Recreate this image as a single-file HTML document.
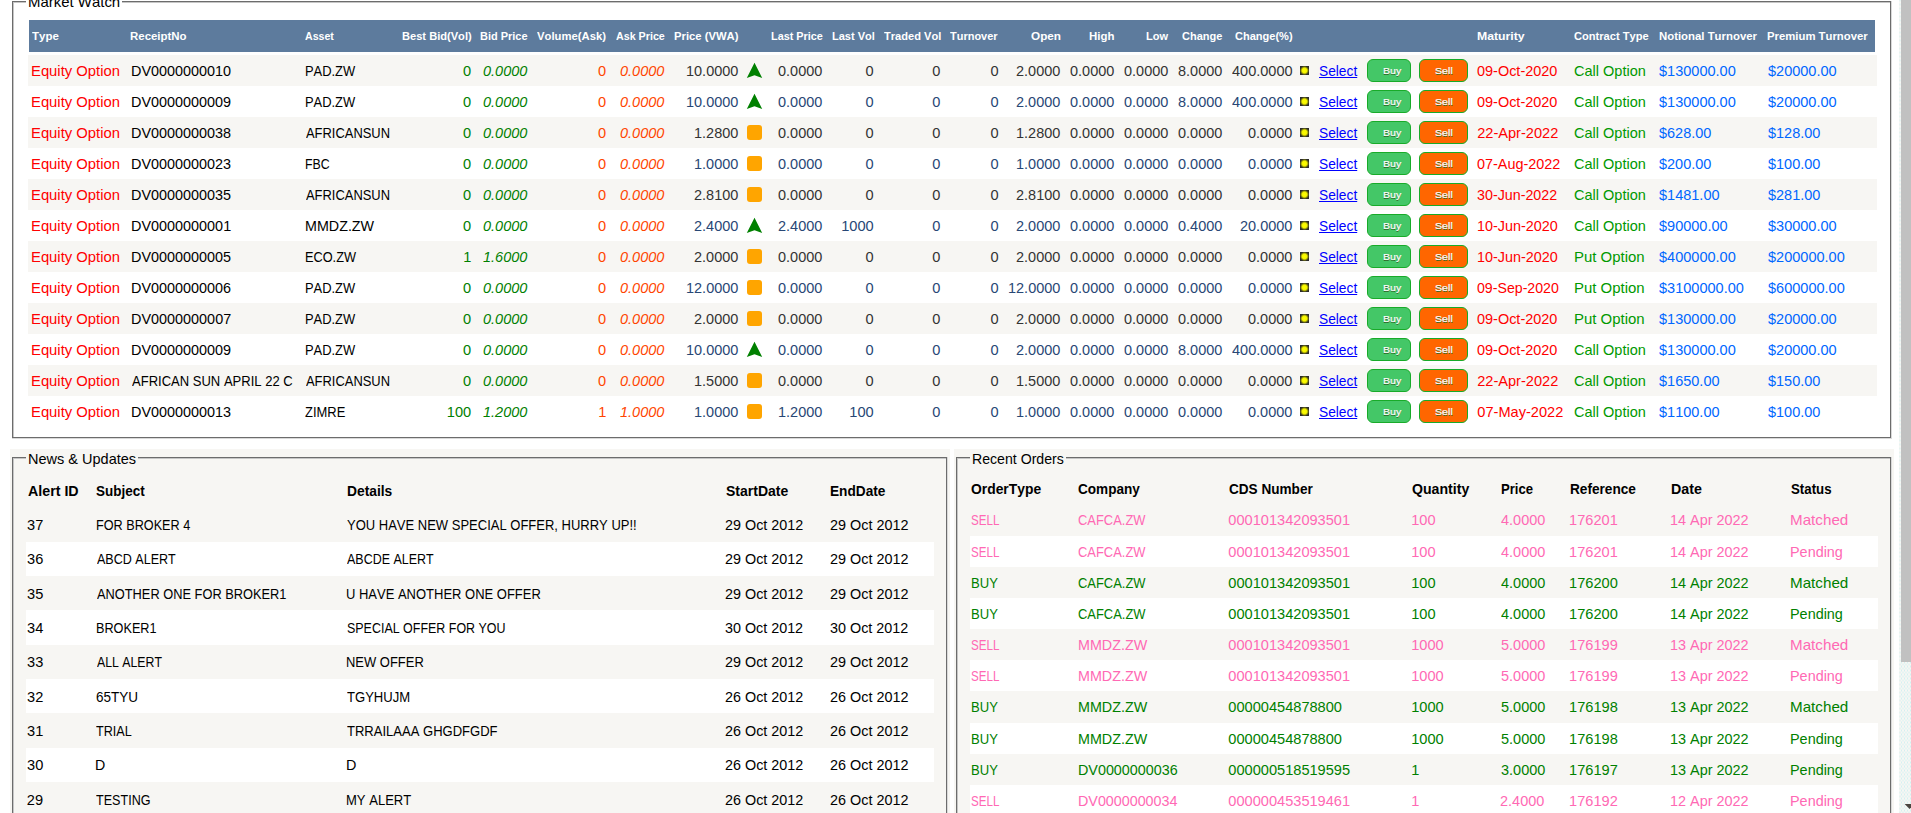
<!DOCTYPE html>
<html><head><meta charset="utf-8"><title>Market Watch</title><style>
html,body{margin:0;padding:0;}
html{width:1911px;height:813px;overflow:hidden;}
body{width:1911px;height:813px;overflow:hidden;position:relative;background:#fff;font-family:"Liberation Sans",sans-serif;font-kerning:none;font-variant-ligatures:none;}
.b{position:absolute;display:block;}
.t{position:absolute;display:block;white-space:pre;line-height:20px;height:20px;transform-origin:0 0;}
.btn{position:absolute;box-sizing:border-box;height:23px;border:1px solid #18ab29;border-radius:6px;}
</style></head><body>
<div class="b" style="left:12px;top:1px;width:14px;height:1px;background:#6c6c6c;"></div>
<div class="b" style="left:122px;top:1px;width:1770px;height:1px;background:#6c6c6c;"></div>
<div class="b" style="left:13px;top:2px;width:13px;height:1px;background:#c6c6c6;"></div>
<div class="b" style="left:122px;top:2px;width:1768px;height:1px;background:#c6c6c6;"></div>
<div class="b" style="left:12px;top:1px;width:1px;height:438px;background:#6c6c6c;"></div>
<div class="b" style="left:13px;top:2px;width:1px;height:436px;background:#c6c6c6;"></div>
<div class="b" style="left:1890px;top:2px;width:1px;height:437px;background:#6c6c6c;"></div>
<div class="b" style="left:1891px;top:1px;width:1px;height:438px;background:#d9d9d9;"></div>
<div class="b" style="left:13px;top:437px;width:1878px;height:1px;background:#6c6c6c;"></div>
<div class="b" style="left:12px;top:438px;width:1880px;height:1px;background:#d9d9d9;"></div>
<div class="b" style="left:10px;top:449px;width:940px;height:364px;background:#F7F6F3;"></div>
<div class="b" style="left:954px;top:449px;width:940px;height:364px;background:#F7F6F3;"></div>
<div class="b" style="left:12px;top:457px;width:14px;height:1px;background:#6c6c6c;"></div>
<div class="b" style="left:138px;top:457px;width:810px;height:1px;background:#6c6c6c;"></div>
<div class="b" style="left:13px;top:458px;width:13px;height:1px;background:#c6c6c6;"></div>
<div class="b" style="left:138px;top:458px;width:808px;height:1px;background:#c6c6c6;"></div>
<div class="b" style="left:12px;top:457px;width:1px;height:356px;background:#6c6c6c;"></div>
<div class="b" style="left:13px;top:458px;width:1px;height:355px;background:#c6c6c6;"></div>
<div class="b" style="left:946px;top:458px;width:1px;height:355px;background:#6c6c6c;"></div>
<div class="b" style="left:947px;top:457px;width:1px;height:356px;background:#d9d9d9;"></div>
<div class="b" style="left:956px;top:457px;width:14px;height:1px;background:#6c6c6c;"></div>
<div class="b" style="left:1066px;top:457px;width:826px;height:1px;background:#6c6c6c;"></div>
<div class="b" style="left:957px;top:458px;width:13px;height:1px;background:#c6c6c6;"></div>
<div class="b" style="left:1066px;top:458px;width:824px;height:1px;background:#c6c6c6;"></div>
<div class="b" style="left:956px;top:457px;width:1px;height:356px;background:#6c6c6c;"></div>
<div class="b" style="left:957px;top:458px;width:1px;height:355px;background:#c6c6c6;"></div>
<div class="b" style="left:1890px;top:458px;width:1px;height:355px;background:#6c6c6c;"></div>
<div class="b" style="left:1891px;top:457px;width:1px;height:356px;background:#d9d9d9;"></div>
<div class="b" style="left:29px;top:20px;width:1846px;height:32px;background:#5D7B9D;"></div>
<span class="t" style="left:32.42px;top:26px;font-size:11.6px;font-weight:bold;font-style:normal;color:#fff;transform:scaleX(0.9907);">Type</span>
<span class="t" style="left:130.38px;top:26px;font-size:11.6px;font-weight:bold;font-style:normal;color:#fff;transform:scaleX(0.9869);">ReceiptNo</span>
<span class="t" style="left:304.79px;top:26px;font-size:11.6px;font-weight:bold;font-style:normal;color:#fff;transform:scaleX(0.9145);">Asset</span>
<span class="t" style="left:401.61px;top:26px;font-size:11.6px;font-weight:bold;font-style:normal;color:#fff;transform:scaleX(0.9571);">Best Bid(Vol)</span>
<span class="t" style="left:479.92px;top:26px;font-size:11.6px;font-weight:bold;font-style:normal;color:#fff;transform:scaleX(0.9468);">Bid Price</span>
<span class="t" style="left:537.47px;top:26px;font-size:11.6px;font-weight:bold;font-style:normal;color:#fff;transform:scaleX(0.9737);">Volume(Ask)</span>
<span class="t" style="left:615.58px;top:26px;font-size:11.6px;font-weight:bold;font-style:normal;color:#fff;transform:scaleX(0.9235);">Ask Price</span>
<span class="t" style="left:674.10px;top:26px;font-size:11.6px;font-weight:bold;font-style:normal;color:#fff;transform:scaleX(0.9703);">Price (VWA)</span>
<span class="t" style="left:771.22px;top:26px;font-size:11.6px;font-weight:bold;font-style:normal;color:#fff;transform:scaleX(0.9359);">Last Price</span>
<span class="t" style="left:831.51px;top:26px;font-size:11.6px;font-weight:bold;font-style:normal;color:#fff;transform:scaleX(0.9512);">Last Vol</span>
<span class="t" style="left:883.83px;top:26px;font-size:11.6px;font-weight:bold;font-style:normal;color:#fff;transform:scaleX(0.9561);">Traded Vol</span>
<span class="t" style="left:950.33px;top:26px;font-size:11.6px;font-weight:bold;font-style:normal;color:#fff;transform:scaleX(0.9466);">Turnover</span>
<span class="t" style="left:1030.97px;top:26px;font-size:11.6px;font-weight:bold;font-style:normal;color:#fff;transform:scaleX(1.0123);">Open</span>
<span class="t" style="left:1089.39px;top:26px;font-size:11.6px;font-weight:bold;font-style:normal;color:#fff;transform:scaleX(0.9845);">High</span>
<span class="t" style="left:1145.61px;top:26px;font-size:11.6px;font-weight:bold;font-style:normal;color:#fff;transform:scaleX(0.9492);">Low</span>
<span class="t" style="left:1181.90px;top:26px;font-size:11.6px;font-weight:bold;font-style:normal;color:#fff;transform:scaleX(0.9480);">Change</span>
<span class="t" style="left:1234.90px;top:26px;font-size:11.6px;font-weight:bold;font-style:normal;color:#fff;transform:scaleX(0.9509);">Change(%)</span>
<span class="t" style="left:1477.23px;top:26px;font-size:11.6px;font-weight:bold;font-style:normal;color:#fff;transform:scaleX(1.0570);">Maturity</span>
<span class="t" style="left:1574.29px;top:26px;font-size:11.6px;font-weight:bold;font-style:normal;color:#fff;transform:scaleX(0.9570);">Contract Type</span>
<span class="t" style="left:1658.59px;top:26px;font-size:11.6px;font-weight:bold;font-style:normal;color:#fff;transform:scaleX(0.9814);">Notional Turnover</span>
<span class="t" style="left:1767.29px;top:26px;font-size:11.6px;font-weight:bold;font-style:normal;color:#fff;transform:scaleX(0.9767);">Premium Turnover</span>
<div class="b" style="left:28px;top:55px;width:1849px;height:31px;background:#F7F6F3;"></div>
<span class="t" style="left:31.23px;top:61px;font-size:14.6px;font-weight:normal;font-style:normal;color:#FF0000;transform:scaleX(1.0152);">Equity Option</span>
<span class="t" style="left:130.57px;top:61px;font-size:14.6px;font-weight:normal;font-style:normal;color:#000;transform:scaleX(0.9858);">DV0000000010</span>
<span class="t" style="left:304.69px;top:61px;font-size:14.6px;font-weight:normal;font-style:normal;color:#000;transform:scaleX(0.8843);">PAD.ZW</span>
<span class="t" style="left:463.10px;top:61px;font-size:14.6px;font-weight:normal;font-style:normal;color:#008000;">0</span>
<span class="t" style="left:483.27px;top:61px;font-size:14.6px;font-weight:normal;font-style:italic;color:#008000;transform:scaleX(0.9920);">0.0000</span>
<span class="t" style="left:598.10px;top:61px;font-size:14.6px;font-weight:normal;font-style:normal;color:#FF4500;">0</span>
<span class="t" style="left:619.87px;top:61px;font-size:14.6px;font-weight:normal;font-style:italic;color:#FF4500;transform:scaleX(0.9920);">0.0000</span>
<span class="t" style="left:685.80px;top:61px;font-size:14.6px;font-weight:normal;font-style:normal;color:#333333;transform:scaleX(0.9933);">10.0000</span>
<span class="t" style="left:778.22px;top:61px;font-size:14.6px;font-weight:normal;font-style:normal;color:#333333;transform:scaleX(0.9920);">0.0000</span>
<span class="t" style="left:865.60px;top:61px;font-size:14.6px;font-weight:normal;font-style:normal;color:#333333;">0</span>
<span class="t" style="left:932.30px;top:61px;font-size:14.6px;font-weight:normal;font-style:normal;color:#333333;">0</span>
<span class="t" style="left:990.60px;top:61px;font-size:14.6px;font-weight:normal;font-style:normal;color:#333333;">0</span>
<span class="t" style="left:1016.12px;top:61px;font-size:14.6px;font-weight:normal;font-style:normal;color:#333333;transform:scaleX(0.9920);">2.0000</span>
<span class="t" style="left:1070.12px;top:61px;font-size:14.6px;font-weight:normal;font-style:normal;color:#333333;transform:scaleX(0.9920);">0.0000</span>
<span class="t" style="left:1124.12px;top:61px;font-size:14.6px;font-weight:normal;font-style:normal;color:#333333;transform:scaleX(0.9920);">0.0000</span>
<span class="t" style="left:1177.72px;top:61px;font-size:14.6px;font-weight:normal;font-style:normal;color:#333333;transform:scaleX(0.9920);">8.0000</span>
<span class="t" style="left:1231.68px;top:61px;font-size:14.6px;font-weight:normal;font-style:normal;color:#333333;transform:scaleX(0.9942);">400.0000</span>
<svg class="b" style="left:746px;top:62px" width="17" height="17" viewBox="0 0 17 17"><path d="M8.5 0.7 L16.2 16 L8.5 13.2 L0.8 16 Z" fill="#008000"/></svg>
<div class="b" style="left:1300px;top:66px;width:9px;height:9px;background:#2b2b2b;background:radial-gradient(circle at 50% 50%,#ffff00 0,#f4f400 2.4px,#6b6b10 3.8px,#2b2b2b 4.6px);"></div>
<span class="t" style="left:1319.33px;top:61px;font-size:14.6px;font-weight:normal;font-style:normal;color:#0000FF;transform:scaleX(0.9420);text-decoration:underline;">Select</span>
<div class="btn" style="left:1367px;top:59px;width:44px;background:#44c767;"></div>
<div class="btn" style="left:1419px;top:59px;width:49px;background:#ff6600;"></div>
<span class="t" style="left:1382.73px;top:61px;font-size:9.7px;font-weight:normal;font-style:normal;color:#fff;transform:scaleX(1.0881);text-shadow:0 1px 0 #2f6627;-webkit-text-stroke:0.2px #fff;">Buy</span>
<span class="t" style="left:1435.32px;top:61px;font-size:9.7px;font-weight:normal;font-style:normal;color:#fff;transform:scaleX(1.1004);text-shadow:0 1px 0 #2f6627;-webkit-text-stroke:0.2px #fff;">Sell</span>
<span class="t" style="left:1477.34px;top:61px;font-size:14.6px;font-weight:normal;font-style:normal;color:#FF0000;transform:scaleX(0.9904);">09-Oct-2020</span>
<span class="t" style="left:1574.01px;top:61px;font-size:14.6px;font-weight:normal;font-style:normal;color:#009900;transform:scaleX(0.9953);">Call Option</span>
<span class="t" style="left:1659.44px;top:61px;font-size:14.6px;font-weight:normal;font-style:normal;color:#0066FF;transform:scaleX(0.9954);">$130000.00</span>
<span class="t" style="left:1768.24px;top:61px;font-size:14.6px;font-weight:normal;font-style:normal;color:#0066FF;transform:scaleX(0.9949);">$20000.00</span>
<div class="b" style="left:28px;top:86px;width:1849px;height:31px;background:#fff;"></div>
<span class="t" style="left:31.23px;top:92px;font-size:14.6px;font-weight:normal;font-style:normal;color:#FF0000;transform:scaleX(1.0152);">Equity Option</span>
<span class="t" style="left:130.57px;top:92px;font-size:14.6px;font-weight:normal;font-style:normal;color:#000;transform:scaleX(0.9870);">DV0000000009</span>
<span class="t" style="left:304.69px;top:92px;font-size:14.6px;font-weight:normal;font-style:normal;color:#000;transform:scaleX(0.8843);">PAD.ZW</span>
<span class="t" style="left:463.10px;top:92px;font-size:14.6px;font-weight:normal;font-style:normal;color:#008000;">0</span>
<span class="t" style="left:483.27px;top:92px;font-size:14.6px;font-weight:normal;font-style:italic;color:#008000;transform:scaleX(0.9920);">0.0000</span>
<span class="t" style="left:598.10px;top:92px;font-size:14.6px;font-weight:normal;font-style:normal;color:#FF4500;">0</span>
<span class="t" style="left:619.87px;top:92px;font-size:14.6px;font-weight:normal;font-style:italic;color:#FF4500;transform:scaleX(0.9920);">0.0000</span>
<span class="t" style="left:685.80px;top:92px;font-size:14.6px;font-weight:normal;font-style:normal;color:#284775;transform:scaleX(0.9933);">10.0000</span>
<span class="t" style="left:778.22px;top:92px;font-size:14.6px;font-weight:normal;font-style:normal;color:#284775;transform:scaleX(0.9920);">0.0000</span>
<span class="t" style="left:865.60px;top:92px;font-size:14.6px;font-weight:normal;font-style:normal;color:#284775;">0</span>
<span class="t" style="left:932.30px;top:92px;font-size:14.6px;font-weight:normal;font-style:normal;color:#284775;">0</span>
<span class="t" style="left:990.60px;top:92px;font-size:14.6px;font-weight:normal;font-style:normal;color:#284775;">0</span>
<span class="t" style="left:1016.12px;top:92px;font-size:14.6px;font-weight:normal;font-style:normal;color:#284775;transform:scaleX(0.9920);">2.0000</span>
<span class="t" style="left:1070.12px;top:92px;font-size:14.6px;font-weight:normal;font-style:normal;color:#284775;transform:scaleX(0.9920);">0.0000</span>
<span class="t" style="left:1124.12px;top:92px;font-size:14.6px;font-weight:normal;font-style:normal;color:#284775;transform:scaleX(0.9920);">0.0000</span>
<span class="t" style="left:1177.72px;top:92px;font-size:14.6px;font-weight:normal;font-style:normal;color:#284775;transform:scaleX(0.9920);">8.0000</span>
<span class="t" style="left:1231.68px;top:92px;font-size:14.6px;font-weight:normal;font-style:normal;color:#284775;transform:scaleX(0.9942);">400.0000</span>
<svg class="b" style="left:746px;top:93px" width="17" height="17" viewBox="0 0 17 17"><path d="M8.5 0.7 L16.2 16 L8.5 13.2 L0.8 16 Z" fill="#008000"/></svg>
<div class="b" style="left:1300px;top:97px;width:9px;height:9px;background:#2b2b2b;background:radial-gradient(circle at 50% 50%,#ffff00 0,#f4f400 2.4px,#6b6b10 3.8px,#2b2b2b 4.6px);"></div>
<span class="t" style="left:1319.33px;top:92px;font-size:14.6px;font-weight:normal;font-style:normal;color:#0000FF;transform:scaleX(0.9420);text-decoration:underline;">Select</span>
<div class="btn" style="left:1367px;top:90px;width:44px;background:#44c767;"></div>
<div class="btn" style="left:1419px;top:90px;width:49px;background:#ff6600;"></div>
<span class="t" style="left:1382.73px;top:92px;font-size:9.7px;font-weight:normal;font-style:normal;color:#fff;transform:scaleX(1.0881);text-shadow:0 1px 0 #2f6627;-webkit-text-stroke:0.2px #fff;">Buy</span>
<span class="t" style="left:1435.32px;top:92px;font-size:9.7px;font-weight:normal;font-style:normal;color:#fff;transform:scaleX(1.1004);text-shadow:0 1px 0 #2f6627;-webkit-text-stroke:0.2px #fff;">Sell</span>
<span class="t" style="left:1477.34px;top:92px;font-size:14.6px;font-weight:normal;font-style:normal;color:#FF0000;transform:scaleX(0.9904);">09-Oct-2020</span>
<span class="t" style="left:1574.01px;top:92px;font-size:14.6px;font-weight:normal;font-style:normal;color:#009900;transform:scaleX(0.9953);">Call Option</span>
<span class="t" style="left:1659.44px;top:92px;font-size:14.6px;font-weight:normal;font-style:normal;color:#0066FF;transform:scaleX(0.9954);">$130000.00</span>
<span class="t" style="left:1768.24px;top:92px;font-size:14.6px;font-weight:normal;font-style:normal;color:#0066FF;transform:scaleX(0.9949);">$20000.00</span>
<div class="b" style="left:28px;top:117px;width:1849px;height:31px;background:#F7F6F3;"></div>
<span class="t" style="left:31.23px;top:123px;font-size:14.6px;font-weight:normal;font-style:normal;color:#FF0000;transform:scaleX(1.0152);">Equity Option</span>
<span class="t" style="left:130.57px;top:123px;font-size:14.6px;font-weight:normal;font-style:normal;color:#000;transform:scaleX(0.9865);">DV0000000038</span>
<span class="t" style="left:305.72px;top:123px;font-size:14.6px;font-weight:normal;font-style:normal;color:#000;transform:scaleX(0.8859);">AFRICANSUN</span>
<span class="t" style="left:463.10px;top:123px;font-size:14.6px;font-weight:normal;font-style:normal;color:#008000;">0</span>
<span class="t" style="left:483.27px;top:123px;font-size:14.6px;font-weight:normal;font-style:italic;color:#008000;transform:scaleX(0.9920);">0.0000</span>
<span class="t" style="left:598.10px;top:123px;font-size:14.6px;font-weight:normal;font-style:normal;color:#FF4500;">0</span>
<span class="t" style="left:619.87px;top:123px;font-size:14.6px;font-weight:normal;font-style:italic;color:#FF4500;transform:scaleX(0.9920);">0.0000</span>
<span class="t" style="left:693.92px;top:123px;font-size:14.6px;font-weight:normal;font-style:normal;color:#333333;transform:scaleX(0.9920);">1.2800</span>
<span class="t" style="left:778.22px;top:123px;font-size:14.6px;font-weight:normal;font-style:normal;color:#333333;transform:scaleX(0.9920);">0.0000</span>
<span class="t" style="left:865.60px;top:123px;font-size:14.6px;font-weight:normal;font-style:normal;color:#333333;">0</span>
<span class="t" style="left:932.30px;top:123px;font-size:14.6px;font-weight:normal;font-style:normal;color:#333333;">0</span>
<span class="t" style="left:990.60px;top:123px;font-size:14.6px;font-weight:normal;font-style:normal;color:#333333;">0</span>
<span class="t" style="left:1016.12px;top:123px;font-size:14.6px;font-weight:normal;font-style:normal;color:#333333;transform:scaleX(0.9920);">1.2800</span>
<span class="t" style="left:1070.12px;top:123px;font-size:14.6px;font-weight:normal;font-style:normal;color:#333333;transform:scaleX(0.9920);">0.0000</span>
<span class="t" style="left:1124.12px;top:123px;font-size:14.6px;font-weight:normal;font-style:normal;color:#333333;transform:scaleX(0.9920);">0.0000</span>
<span class="t" style="left:1177.72px;top:123px;font-size:14.6px;font-weight:normal;font-style:normal;color:#333333;transform:scaleX(0.9920);">0.0000</span>
<span class="t" style="left:1247.92px;top:123px;font-size:14.6px;font-weight:normal;font-style:normal;color:#333333;transform:scaleX(0.9920);">0.0000</span>
<div class="b" style="left:747px;top:125px;width:15px;height:15px;background:#FFA500;border-radius:3px;"></div>
<div class="b" style="left:1300px;top:128px;width:9px;height:9px;background:#2b2b2b;background:radial-gradient(circle at 50% 50%,#ffff00 0,#f4f400 2.4px,#6b6b10 3.8px,#2b2b2b 4.6px);"></div>
<span class="t" style="left:1319.33px;top:123px;font-size:14.6px;font-weight:normal;font-style:normal;color:#0000FF;transform:scaleX(0.9420);text-decoration:underline;">Select</span>
<div class="btn" style="left:1367px;top:121px;width:44px;background:#44c767;"></div>
<div class="btn" style="left:1419px;top:121px;width:49px;background:#ff6600;"></div>
<span class="t" style="left:1382.73px;top:123px;font-size:9.7px;font-weight:normal;font-style:normal;color:#fff;transform:scaleX(1.0881);text-shadow:0 1px 0 #2f6627;-webkit-text-stroke:0.2px #fff;">Buy</span>
<span class="t" style="left:1435.32px;top:123px;font-size:9.7px;font-weight:normal;font-style:normal;color:#fff;transform:scaleX(1.1004);text-shadow:0 1px 0 #2f6627;-webkit-text-stroke:0.2px #fff;">Sell</span>
<span class="t" style="left:1477.17px;top:123px;font-size:14.6px;font-weight:normal;font-style:normal;color:#FF0000;">22-Apr-2022</span>
<span class="t" style="left:1574.01px;top:123px;font-size:14.6px;font-weight:normal;font-style:normal;color:#009900;transform:scaleX(0.9953);">Call Option</span>
<span class="t" style="left:1659.44px;top:123px;font-size:14.6px;font-weight:normal;font-style:normal;color:#0066FF;transform:scaleX(0.9933);">$628.00</span>
<span class="t" style="left:1768.24px;top:123px;font-size:14.6px;font-weight:normal;font-style:normal;color:#0066FF;transform:scaleX(0.9933);">$128.00</span>
<div class="b" style="left:28px;top:148px;width:1849px;height:31px;background:#fff;"></div>
<span class="t" style="left:31.23px;top:154px;font-size:14.6px;font-weight:normal;font-style:normal;color:#FF0000;transform:scaleX(1.0152);">Equity Option</span>
<span class="t" style="left:130.57px;top:154px;font-size:14.6px;font-weight:normal;font-style:normal;color:#000;transform:scaleX(0.9865);">DV0000000023</span>
<span class="t" style="left:304.74px;top:154px;font-size:14.6px;font-weight:normal;font-style:normal;color:#000;transform:scaleX(0.8453);">FBC</span>
<span class="t" style="left:463.10px;top:154px;font-size:14.6px;font-weight:normal;font-style:normal;color:#008000;">0</span>
<span class="t" style="left:483.27px;top:154px;font-size:14.6px;font-weight:normal;font-style:italic;color:#008000;transform:scaleX(0.9920);">0.0000</span>
<span class="t" style="left:598.10px;top:154px;font-size:14.6px;font-weight:normal;font-style:normal;color:#FF4500;">0</span>
<span class="t" style="left:619.87px;top:154px;font-size:14.6px;font-weight:normal;font-style:italic;color:#FF4500;transform:scaleX(0.9920);">0.0000</span>
<span class="t" style="left:693.92px;top:154px;font-size:14.6px;font-weight:normal;font-style:normal;color:#284775;transform:scaleX(0.9920);">1.0000</span>
<span class="t" style="left:778.22px;top:154px;font-size:14.6px;font-weight:normal;font-style:normal;color:#284775;transform:scaleX(0.9920);">0.0000</span>
<span class="t" style="left:865.60px;top:154px;font-size:14.6px;font-weight:normal;font-style:normal;color:#284775;">0</span>
<span class="t" style="left:932.30px;top:154px;font-size:14.6px;font-weight:normal;font-style:normal;color:#284775;">0</span>
<span class="t" style="left:990.60px;top:154px;font-size:14.6px;font-weight:normal;font-style:normal;color:#284775;">0</span>
<span class="t" style="left:1016.12px;top:154px;font-size:14.6px;font-weight:normal;font-style:normal;color:#284775;transform:scaleX(0.9920);">1.0000</span>
<span class="t" style="left:1070.12px;top:154px;font-size:14.6px;font-weight:normal;font-style:normal;color:#284775;transform:scaleX(0.9920);">0.0000</span>
<span class="t" style="left:1124.12px;top:154px;font-size:14.6px;font-weight:normal;font-style:normal;color:#284775;transform:scaleX(0.9920);">0.0000</span>
<span class="t" style="left:1177.72px;top:154px;font-size:14.6px;font-weight:normal;font-style:normal;color:#284775;transform:scaleX(0.9920);">0.0000</span>
<span class="t" style="left:1247.92px;top:154px;font-size:14.6px;font-weight:normal;font-style:normal;color:#284775;transform:scaleX(0.9920);">0.0000</span>
<div class="b" style="left:747px;top:156px;width:15px;height:15px;background:#FFA500;border-radius:3px;"></div>
<div class="b" style="left:1300px;top:159px;width:9px;height:9px;background:#2b2b2b;background:radial-gradient(circle at 50% 50%,#ffff00 0,#f4f400 2.4px,#6b6b10 3.8px,#2b2b2b 4.6px);"></div>
<span class="t" style="left:1319.33px;top:154px;font-size:14.6px;font-weight:normal;font-style:normal;color:#0000FF;transform:scaleX(0.9420);text-decoration:underline;">Select</span>
<div class="btn" style="left:1367px;top:152px;width:44px;background:#44c767;"></div>
<div class="btn" style="left:1419px;top:152px;width:49px;background:#ff6600;"></div>
<span class="t" style="left:1382.73px;top:154px;font-size:9.7px;font-weight:normal;font-style:normal;color:#fff;transform:scaleX(1.0881);text-shadow:0 1px 0 #2f6627;-webkit-text-stroke:0.2px #fff;">Buy</span>
<span class="t" style="left:1435.32px;top:154px;font-size:9.7px;font-weight:normal;font-style:normal;color:#fff;transform:scaleX(1.1004);text-shadow:0 1px 0 #2f6627;-webkit-text-stroke:0.2px #fff;">Sell</span>
<span class="t" style="left:1477.34px;top:154px;font-size:14.6px;font-weight:normal;font-style:normal;color:#FF0000;transform:scaleX(0.9860);">07-Aug-2022</span>
<span class="t" style="left:1574.01px;top:154px;font-size:14.6px;font-weight:normal;font-style:normal;color:#009900;transform:scaleX(0.9953);">Call Option</span>
<span class="t" style="left:1659.44px;top:154px;font-size:14.6px;font-weight:normal;font-style:normal;color:#0066FF;transform:scaleX(0.9933);">$200.00</span>
<span class="t" style="left:1768.24px;top:154px;font-size:14.6px;font-weight:normal;font-style:normal;color:#0066FF;transform:scaleX(0.9933);">$100.00</span>
<div class="b" style="left:28px;top:179px;width:1849px;height:31px;background:#F7F6F3;"></div>
<span class="t" style="left:31.23px;top:185px;font-size:14.6px;font-weight:normal;font-style:normal;color:#FF0000;transform:scaleX(1.0152);">Equity Option</span>
<span class="t" style="left:130.57px;top:185px;font-size:14.6px;font-weight:normal;font-style:normal;color:#000;transform:scaleX(0.9863);">DV0000000035</span>
<span class="t" style="left:305.72px;top:185px;font-size:14.6px;font-weight:normal;font-style:normal;color:#000;transform:scaleX(0.8859);">AFRICANSUN</span>
<span class="t" style="left:463.10px;top:185px;font-size:14.6px;font-weight:normal;font-style:normal;color:#008000;">0</span>
<span class="t" style="left:483.27px;top:185px;font-size:14.6px;font-weight:normal;font-style:italic;color:#008000;transform:scaleX(0.9920);">0.0000</span>
<span class="t" style="left:598.10px;top:185px;font-size:14.6px;font-weight:normal;font-style:normal;color:#FF4500;">0</span>
<span class="t" style="left:619.87px;top:185px;font-size:14.6px;font-weight:normal;font-style:italic;color:#FF4500;transform:scaleX(0.9920);">0.0000</span>
<span class="t" style="left:693.92px;top:185px;font-size:14.6px;font-weight:normal;font-style:normal;color:#333333;transform:scaleX(0.9920);">2.8100</span>
<span class="t" style="left:778.22px;top:185px;font-size:14.6px;font-weight:normal;font-style:normal;color:#333333;transform:scaleX(0.9920);">0.0000</span>
<span class="t" style="left:865.60px;top:185px;font-size:14.6px;font-weight:normal;font-style:normal;color:#333333;">0</span>
<span class="t" style="left:932.30px;top:185px;font-size:14.6px;font-weight:normal;font-style:normal;color:#333333;">0</span>
<span class="t" style="left:990.60px;top:185px;font-size:14.6px;font-weight:normal;font-style:normal;color:#333333;">0</span>
<span class="t" style="left:1016.12px;top:185px;font-size:14.6px;font-weight:normal;font-style:normal;color:#333333;transform:scaleX(0.9920);">2.8100</span>
<span class="t" style="left:1070.12px;top:185px;font-size:14.6px;font-weight:normal;font-style:normal;color:#333333;transform:scaleX(0.9920);">0.0000</span>
<span class="t" style="left:1124.12px;top:185px;font-size:14.6px;font-weight:normal;font-style:normal;color:#333333;transform:scaleX(0.9920);">0.0000</span>
<span class="t" style="left:1177.72px;top:185px;font-size:14.6px;font-weight:normal;font-style:normal;color:#333333;transform:scaleX(0.9920);">0.0000</span>
<span class="t" style="left:1247.92px;top:185px;font-size:14.6px;font-weight:normal;font-style:normal;color:#333333;transform:scaleX(0.9920);">0.0000</span>
<div class="b" style="left:747px;top:187px;width:15px;height:15px;background:#FFA500;border-radius:3px;"></div>
<div class="b" style="left:1300px;top:190px;width:9px;height:9px;background:#2b2b2b;background:radial-gradient(circle at 50% 50%,#ffff00 0,#f4f400 2.4px,#6b6b10 3.8px,#2b2b2b 4.6px);"></div>
<span class="t" style="left:1319.33px;top:185px;font-size:14.6px;font-weight:normal;font-style:normal;color:#0000FF;transform:scaleX(0.9420);text-decoration:underline;">Select</span>
<div class="btn" style="left:1367px;top:183px;width:44px;background:#44c767;"></div>
<div class="btn" style="left:1419px;top:183px;width:49px;background:#ff6600;"></div>
<span class="t" style="left:1382.73px;top:185px;font-size:9.7px;font-weight:normal;font-style:normal;color:#fff;transform:scaleX(1.0881);text-shadow:0 1px 0 #2f6627;-webkit-text-stroke:0.2px #fff;">Buy</span>
<span class="t" style="left:1435.32px;top:185px;font-size:9.7px;font-weight:normal;font-style:normal;color:#fff;transform:scaleX(1.1004);text-shadow:0 1px 0 #2f6627;-webkit-text-stroke:0.2px #fff;">Sell</span>
<span class="t" style="left:1477.36px;top:185px;font-size:14.6px;font-weight:normal;font-style:normal;color:#FF0000;transform:scaleX(0.9784);">30-Jun-2022</span>
<span class="t" style="left:1574.01px;top:185px;font-size:14.6px;font-weight:normal;font-style:normal;color:#009900;transform:scaleX(0.9953);">Call Option</span>
<span class="t" style="left:1659.44px;top:185px;font-size:14.6px;font-weight:normal;font-style:normal;color:#0066FF;transform:scaleX(0.9942);">$1481.00</span>
<span class="t" style="left:1768.24px;top:185px;font-size:14.6px;font-weight:normal;font-style:normal;color:#0066FF;transform:scaleX(0.9933);">$281.00</span>
<div class="b" style="left:28px;top:210px;width:1849px;height:31px;background:#fff;"></div>
<span class="t" style="left:31.23px;top:216px;font-size:14.6px;font-weight:normal;font-style:normal;color:#FF0000;transform:scaleX(1.0152);">Equity Option</span>
<span class="t" style="left:130.57px;top:216px;font-size:14.6px;font-weight:normal;font-style:normal;color:#000;transform:scaleX(0.9873);">DV0000000001</span>
<span class="t" style="left:304.58px;top:216px;font-size:14.6px;font-weight:normal;font-style:normal;color:#000;transform:scaleX(0.9799);">MMDZ.ZW</span>
<span class="t" style="left:463.10px;top:216px;font-size:14.6px;font-weight:normal;font-style:normal;color:#008000;">0</span>
<span class="t" style="left:483.27px;top:216px;font-size:14.6px;font-weight:normal;font-style:italic;color:#008000;transform:scaleX(0.9920);">0.0000</span>
<span class="t" style="left:598.10px;top:216px;font-size:14.6px;font-weight:normal;font-style:normal;color:#FF4500;">0</span>
<span class="t" style="left:619.87px;top:216px;font-size:14.6px;font-weight:normal;font-style:italic;color:#FF4500;transform:scaleX(0.9920);">0.0000</span>
<span class="t" style="left:693.92px;top:216px;font-size:14.6px;font-weight:normal;font-style:normal;color:#284775;transform:scaleX(0.9920);">2.4000</span>
<span class="t" style="left:778.22px;top:216px;font-size:14.6px;font-weight:normal;font-style:normal;color:#284775;transform:scaleX(0.9920);">2.4000</span>
<span class="t" style="left:841.24px;top:216px;font-size:14.6px;font-weight:normal;font-style:normal;color:#284775;">1000</span>
<span class="t" style="left:932.30px;top:216px;font-size:14.6px;font-weight:normal;font-style:normal;color:#284775;">0</span>
<span class="t" style="left:990.60px;top:216px;font-size:14.6px;font-weight:normal;font-style:normal;color:#284775;">0</span>
<span class="t" style="left:1016.12px;top:216px;font-size:14.6px;font-weight:normal;font-style:normal;color:#284775;transform:scaleX(0.9920);">2.0000</span>
<span class="t" style="left:1070.12px;top:216px;font-size:14.6px;font-weight:normal;font-style:normal;color:#284775;transform:scaleX(0.9920);">0.0000</span>
<span class="t" style="left:1124.12px;top:216px;font-size:14.6px;font-weight:normal;font-style:normal;color:#284775;transform:scaleX(0.9920);">0.0000</span>
<span class="t" style="left:1177.72px;top:216px;font-size:14.6px;font-weight:normal;font-style:normal;color:#284775;transform:scaleX(0.9920);">0.4000</span>
<span class="t" style="left:1239.80px;top:216px;font-size:14.6px;font-weight:normal;font-style:normal;color:#284775;transform:scaleX(0.9933);">20.0000</span>
<svg class="b" style="left:746px;top:217px" width="17" height="17" viewBox="0 0 17 17"><path d="M8.5 0.7 L16.2 16 L8.5 13.2 L0.8 16 Z" fill="#008000"/></svg>
<div class="b" style="left:1300px;top:221px;width:9px;height:9px;background:#2b2b2b;background:radial-gradient(circle at 50% 50%,#ffff00 0,#f4f400 2.4px,#6b6b10 3.8px,#2b2b2b 4.6px);"></div>
<span class="t" style="left:1319.33px;top:216px;font-size:14.6px;font-weight:normal;font-style:normal;color:#0000FF;transform:scaleX(0.9420);text-decoration:underline;">Select</span>
<div class="btn" style="left:1367px;top:214px;width:44px;background:#44c767;"></div>
<div class="btn" style="left:1419px;top:214px;width:49px;background:#ff6600;"></div>
<span class="t" style="left:1382.73px;top:216px;font-size:9.7px;font-weight:normal;font-style:normal;color:#fff;transform:scaleX(1.0881);text-shadow:0 1px 0 #2f6627;-webkit-text-stroke:0.2px #fff;">Buy</span>
<span class="t" style="left:1435.32px;top:216px;font-size:9.7px;font-weight:normal;font-style:normal;color:#fff;transform:scaleX(1.1004);text-shadow:0 1px 0 #2f6627;-webkit-text-stroke:0.2px #fff;">Sell</span>
<span class="t" style="left:1476.80px;top:216px;font-size:14.6px;font-weight:normal;font-style:normal;color:#FF0000;transform:scaleX(0.9857);">10-Jun-2020</span>
<span class="t" style="left:1574.01px;top:216px;font-size:14.6px;font-weight:normal;font-style:normal;color:#009900;transform:scaleX(0.9953);">Call Option</span>
<span class="t" style="left:1659.44px;top:216px;font-size:14.6px;font-weight:normal;font-style:normal;color:#0066FF;transform:scaleX(0.9949);">$90000.00</span>
<span class="t" style="left:1768.24px;top:216px;font-size:14.6px;font-weight:normal;font-style:normal;color:#0066FF;transform:scaleX(0.9949);">$30000.00</span>
<div class="b" style="left:28px;top:241px;width:1849px;height:31px;background:#F7F6F3;"></div>
<span class="t" style="left:31.23px;top:247px;font-size:14.6px;font-weight:normal;font-style:normal;color:#FF0000;transform:scaleX(1.0152);">Equity Option</span>
<span class="t" style="left:130.57px;top:247px;font-size:14.6px;font-weight:normal;font-style:normal;color:#000;transform:scaleX(0.9863);">DV0000000005</span>
<span class="t" style="left:304.70px;top:247px;font-size:14.6px;font-weight:normal;font-style:normal;color:#000;transform:scaleX(0.8732);">ECO.ZW</span>
<span class="t" style="left:463.24px;top:247px;font-size:14.6px;font-weight:normal;font-style:normal;color:#008000;">1</span>
<span class="t" style="left:483.27px;top:247px;font-size:14.6px;font-weight:normal;font-style:italic;color:#008000;transform:scaleX(0.9920);">1.6000</span>
<span class="t" style="left:598.10px;top:247px;font-size:14.6px;font-weight:normal;font-style:normal;color:#FF4500;">0</span>
<span class="t" style="left:619.87px;top:247px;font-size:14.6px;font-weight:normal;font-style:italic;color:#FF4500;transform:scaleX(0.9920);">0.0000</span>
<span class="t" style="left:693.92px;top:247px;font-size:14.6px;font-weight:normal;font-style:normal;color:#333333;transform:scaleX(0.9920);">2.0000</span>
<span class="t" style="left:778.22px;top:247px;font-size:14.6px;font-weight:normal;font-style:normal;color:#333333;transform:scaleX(0.9920);">0.0000</span>
<span class="t" style="left:865.60px;top:247px;font-size:14.6px;font-weight:normal;font-style:normal;color:#333333;">0</span>
<span class="t" style="left:932.30px;top:247px;font-size:14.6px;font-weight:normal;font-style:normal;color:#333333;">0</span>
<span class="t" style="left:990.60px;top:247px;font-size:14.6px;font-weight:normal;font-style:normal;color:#333333;">0</span>
<span class="t" style="left:1016.12px;top:247px;font-size:14.6px;font-weight:normal;font-style:normal;color:#333333;transform:scaleX(0.9920);">2.0000</span>
<span class="t" style="left:1070.12px;top:247px;font-size:14.6px;font-weight:normal;font-style:normal;color:#333333;transform:scaleX(0.9920);">0.0000</span>
<span class="t" style="left:1124.12px;top:247px;font-size:14.6px;font-weight:normal;font-style:normal;color:#333333;transform:scaleX(0.9920);">0.0000</span>
<span class="t" style="left:1177.72px;top:247px;font-size:14.6px;font-weight:normal;font-style:normal;color:#333333;transform:scaleX(0.9920);">0.0000</span>
<span class="t" style="left:1247.92px;top:247px;font-size:14.6px;font-weight:normal;font-style:normal;color:#333333;transform:scaleX(0.9920);">0.0000</span>
<div class="b" style="left:747px;top:249px;width:15px;height:15px;background:#FFA500;border-radius:3px;"></div>
<div class="b" style="left:1300px;top:252px;width:9px;height:9px;background:#2b2b2b;background:radial-gradient(circle at 50% 50%,#ffff00 0,#f4f400 2.4px,#6b6b10 3.8px,#2b2b2b 4.6px);"></div>
<span class="t" style="left:1319.33px;top:247px;font-size:14.6px;font-weight:normal;font-style:normal;color:#0000FF;transform:scaleX(0.9420);text-decoration:underline;">Select</span>
<div class="btn" style="left:1367px;top:245px;width:44px;background:#44c767;"></div>
<div class="btn" style="left:1419px;top:245px;width:49px;background:#ff6600;"></div>
<span class="t" style="left:1382.73px;top:247px;font-size:9.7px;font-weight:normal;font-style:normal;color:#fff;transform:scaleX(1.0881);text-shadow:0 1px 0 #2f6627;-webkit-text-stroke:0.2px #fff;">Buy</span>
<span class="t" style="left:1435.32px;top:247px;font-size:9.7px;font-weight:normal;font-style:normal;color:#fff;transform:scaleX(1.1004);text-shadow:0 1px 0 #2f6627;-webkit-text-stroke:0.2px #fff;">Sell</span>
<span class="t" style="left:1476.80px;top:247px;font-size:14.6px;font-weight:normal;font-style:normal;color:#FF0000;transform:scaleX(0.9857);">10-Jun-2020</span>
<span class="t" style="left:1573.52px;top:247px;font-size:14.6px;font-weight:normal;font-style:normal;color:#009900;transform:scaleX(1.0233);">Put Option</span>
<span class="t" style="left:1659.44px;top:247px;font-size:14.6px;font-weight:normal;font-style:normal;color:#0066FF;transform:scaleX(0.9954);">$400000.00</span>
<span class="t" style="left:1768.24px;top:247px;font-size:14.6px;font-weight:normal;font-style:normal;color:#0066FF;transform:scaleX(0.9954);">$200000.00</span>
<div class="b" style="left:28px;top:272px;width:1849px;height:31px;background:#fff;"></div>
<span class="t" style="left:31.23px;top:278px;font-size:14.6px;font-weight:normal;font-style:normal;color:#FF0000;transform:scaleX(1.0152);">Equity Option</span>
<span class="t" style="left:130.57px;top:278px;font-size:14.6px;font-weight:normal;font-style:normal;color:#000;transform:scaleX(0.9865);">DV0000000006</span>
<span class="t" style="left:304.69px;top:278px;font-size:14.6px;font-weight:normal;font-style:normal;color:#000;transform:scaleX(0.8843);">PAD.ZW</span>
<span class="t" style="left:463.10px;top:278px;font-size:14.6px;font-weight:normal;font-style:normal;color:#008000;">0</span>
<span class="t" style="left:483.27px;top:278px;font-size:14.6px;font-weight:normal;font-style:italic;color:#008000;transform:scaleX(0.9920);">0.0000</span>
<span class="t" style="left:598.10px;top:278px;font-size:14.6px;font-weight:normal;font-style:normal;color:#FF4500;">0</span>
<span class="t" style="left:619.87px;top:278px;font-size:14.6px;font-weight:normal;font-style:italic;color:#FF4500;transform:scaleX(0.9920);">0.0000</span>
<span class="t" style="left:685.80px;top:278px;font-size:14.6px;font-weight:normal;font-style:normal;color:#284775;transform:scaleX(0.9933);">12.0000</span>
<span class="t" style="left:778.22px;top:278px;font-size:14.6px;font-weight:normal;font-style:normal;color:#284775;transform:scaleX(0.9920);">0.0000</span>
<span class="t" style="left:865.60px;top:278px;font-size:14.6px;font-weight:normal;font-style:normal;color:#284775;">0</span>
<span class="t" style="left:932.30px;top:278px;font-size:14.6px;font-weight:normal;font-style:normal;color:#284775;">0</span>
<span class="t" style="left:990.60px;top:278px;font-size:14.6px;font-weight:normal;font-style:normal;color:#284775;">0</span>
<span class="t" style="left:1008.00px;top:278px;font-size:14.6px;font-weight:normal;font-style:normal;color:#284775;transform:scaleX(0.9933);">12.0000</span>
<span class="t" style="left:1070.12px;top:278px;font-size:14.6px;font-weight:normal;font-style:normal;color:#284775;transform:scaleX(0.9920);">0.0000</span>
<span class="t" style="left:1124.12px;top:278px;font-size:14.6px;font-weight:normal;font-style:normal;color:#284775;transform:scaleX(0.9920);">0.0000</span>
<span class="t" style="left:1177.72px;top:278px;font-size:14.6px;font-weight:normal;font-style:normal;color:#284775;transform:scaleX(0.9920);">0.0000</span>
<span class="t" style="left:1247.92px;top:278px;font-size:14.6px;font-weight:normal;font-style:normal;color:#284775;transform:scaleX(0.9920);">0.0000</span>
<div class="b" style="left:747px;top:280px;width:15px;height:15px;background:#FFA500;border-radius:3px;"></div>
<div class="b" style="left:1300px;top:283px;width:9px;height:9px;background:#2b2b2b;background:radial-gradient(circle at 50% 50%,#ffff00 0,#f4f400 2.4px,#6b6b10 3.8px,#2b2b2b 4.6px);"></div>
<span class="t" style="left:1319.33px;top:278px;font-size:14.6px;font-weight:normal;font-style:normal;color:#0000FF;transform:scaleX(0.9420);text-decoration:underline;">Select</span>
<div class="btn" style="left:1367px;top:276px;width:44px;background:#44c767;"></div>
<div class="btn" style="left:1419px;top:276px;width:49px;background:#ff6600;"></div>
<span class="t" style="left:1382.73px;top:278px;font-size:9.7px;font-weight:normal;font-style:normal;color:#fff;transform:scaleX(1.0881);text-shadow:0 1px 0 #2f6627;-webkit-text-stroke:0.2px #fff;">Buy</span>
<span class="t" style="left:1435.32px;top:278px;font-size:9.7px;font-weight:normal;font-style:normal;color:#fff;transform:scaleX(1.1004);text-shadow:0 1px 0 #2f6627;-webkit-text-stroke:0.2px #fff;">Sell</span>
<span class="t" style="left:1477.35px;top:278px;font-size:14.6px;font-weight:normal;font-style:normal;color:#FF0000;transform:scaleX(0.9696);">09-Sep-2020</span>
<span class="t" style="left:1573.52px;top:278px;font-size:14.6px;font-weight:normal;font-style:normal;color:#009900;transform:scaleX(1.0233);">Put Option</span>
<span class="t" style="left:1659.44px;top:278px;font-size:14.6px;font-weight:normal;font-style:normal;color:#0066FF;transform:scaleX(0.9958);">$3100000.00</span>
<span class="t" style="left:1768.24px;top:278px;font-size:14.6px;font-weight:normal;font-style:normal;color:#0066FF;transform:scaleX(0.9954);">$600000.00</span>
<div class="b" style="left:28px;top:303px;width:1849px;height:31px;background:#F7F6F3;"></div>
<span class="t" style="left:31.23px;top:309px;font-size:14.6px;font-weight:normal;font-style:normal;color:#FF0000;transform:scaleX(1.0152);">Equity Option</span>
<span class="t" style="left:130.57px;top:309px;font-size:14.6px;font-weight:normal;font-style:normal;color:#000;transform:scaleX(0.9875);">DV0000000007</span>
<span class="t" style="left:304.69px;top:309px;font-size:14.6px;font-weight:normal;font-style:normal;color:#000;transform:scaleX(0.8843);">PAD.ZW</span>
<span class="t" style="left:463.10px;top:309px;font-size:14.6px;font-weight:normal;font-style:normal;color:#008000;">0</span>
<span class="t" style="left:483.27px;top:309px;font-size:14.6px;font-weight:normal;font-style:italic;color:#008000;transform:scaleX(0.9920);">0.0000</span>
<span class="t" style="left:598.10px;top:309px;font-size:14.6px;font-weight:normal;font-style:normal;color:#FF4500;">0</span>
<span class="t" style="left:619.87px;top:309px;font-size:14.6px;font-weight:normal;font-style:italic;color:#FF4500;transform:scaleX(0.9920);">0.0000</span>
<span class="t" style="left:693.92px;top:309px;font-size:14.6px;font-weight:normal;font-style:normal;color:#333333;transform:scaleX(0.9920);">2.0000</span>
<span class="t" style="left:778.22px;top:309px;font-size:14.6px;font-weight:normal;font-style:normal;color:#333333;transform:scaleX(0.9920);">0.0000</span>
<span class="t" style="left:865.60px;top:309px;font-size:14.6px;font-weight:normal;font-style:normal;color:#333333;">0</span>
<span class="t" style="left:932.30px;top:309px;font-size:14.6px;font-weight:normal;font-style:normal;color:#333333;">0</span>
<span class="t" style="left:990.60px;top:309px;font-size:14.6px;font-weight:normal;font-style:normal;color:#333333;">0</span>
<span class="t" style="left:1016.12px;top:309px;font-size:14.6px;font-weight:normal;font-style:normal;color:#333333;transform:scaleX(0.9920);">2.0000</span>
<span class="t" style="left:1070.12px;top:309px;font-size:14.6px;font-weight:normal;font-style:normal;color:#333333;transform:scaleX(0.9920);">0.0000</span>
<span class="t" style="left:1124.12px;top:309px;font-size:14.6px;font-weight:normal;font-style:normal;color:#333333;transform:scaleX(0.9920);">0.0000</span>
<span class="t" style="left:1177.72px;top:309px;font-size:14.6px;font-weight:normal;font-style:normal;color:#333333;transform:scaleX(0.9920);">0.0000</span>
<span class="t" style="left:1247.92px;top:309px;font-size:14.6px;font-weight:normal;font-style:normal;color:#333333;transform:scaleX(0.9920);">0.0000</span>
<div class="b" style="left:747px;top:311px;width:15px;height:15px;background:#FFA500;border-radius:3px;"></div>
<div class="b" style="left:1300px;top:314px;width:9px;height:9px;background:#2b2b2b;background:radial-gradient(circle at 50% 50%,#ffff00 0,#f4f400 2.4px,#6b6b10 3.8px,#2b2b2b 4.6px);"></div>
<span class="t" style="left:1319.33px;top:309px;font-size:14.6px;font-weight:normal;font-style:normal;color:#0000FF;transform:scaleX(0.9420);text-decoration:underline;">Select</span>
<div class="btn" style="left:1367px;top:307px;width:44px;background:#44c767;"></div>
<div class="btn" style="left:1419px;top:307px;width:49px;background:#ff6600;"></div>
<span class="t" style="left:1382.73px;top:309px;font-size:9.7px;font-weight:normal;font-style:normal;color:#fff;transform:scaleX(1.0881);text-shadow:0 1px 0 #2f6627;-webkit-text-stroke:0.2px #fff;">Buy</span>
<span class="t" style="left:1435.32px;top:309px;font-size:9.7px;font-weight:normal;font-style:normal;color:#fff;transform:scaleX(1.1004);text-shadow:0 1px 0 #2f6627;-webkit-text-stroke:0.2px #fff;">Sell</span>
<span class="t" style="left:1477.34px;top:309px;font-size:14.6px;font-weight:normal;font-style:normal;color:#FF0000;transform:scaleX(0.9904);">09-Oct-2020</span>
<span class="t" style="left:1573.52px;top:309px;font-size:14.6px;font-weight:normal;font-style:normal;color:#009900;transform:scaleX(1.0233);">Put Option</span>
<span class="t" style="left:1659.44px;top:309px;font-size:14.6px;font-weight:normal;font-style:normal;color:#0066FF;transform:scaleX(0.9954);">$130000.00</span>
<span class="t" style="left:1768.24px;top:309px;font-size:14.6px;font-weight:normal;font-style:normal;color:#0066FF;transform:scaleX(0.9949);">$20000.00</span>
<div class="b" style="left:28px;top:334px;width:1849px;height:31px;background:#fff;"></div>
<span class="t" style="left:31.23px;top:340px;font-size:14.6px;font-weight:normal;font-style:normal;color:#FF0000;transform:scaleX(1.0152);">Equity Option</span>
<span class="t" style="left:130.57px;top:340px;font-size:14.6px;font-weight:normal;font-style:normal;color:#000;transform:scaleX(0.9870);">DV0000000009</span>
<span class="t" style="left:304.69px;top:340px;font-size:14.6px;font-weight:normal;font-style:normal;color:#000;transform:scaleX(0.8843);">PAD.ZW</span>
<span class="t" style="left:463.10px;top:340px;font-size:14.6px;font-weight:normal;font-style:normal;color:#008000;">0</span>
<span class="t" style="left:483.27px;top:340px;font-size:14.6px;font-weight:normal;font-style:italic;color:#008000;transform:scaleX(0.9920);">0.0000</span>
<span class="t" style="left:598.10px;top:340px;font-size:14.6px;font-weight:normal;font-style:normal;color:#FF4500;">0</span>
<span class="t" style="left:619.87px;top:340px;font-size:14.6px;font-weight:normal;font-style:italic;color:#FF4500;transform:scaleX(0.9920);">0.0000</span>
<span class="t" style="left:685.80px;top:340px;font-size:14.6px;font-weight:normal;font-style:normal;color:#284775;transform:scaleX(0.9933);">10.0000</span>
<span class="t" style="left:778.22px;top:340px;font-size:14.6px;font-weight:normal;font-style:normal;color:#284775;transform:scaleX(0.9920);">0.0000</span>
<span class="t" style="left:865.60px;top:340px;font-size:14.6px;font-weight:normal;font-style:normal;color:#284775;">0</span>
<span class="t" style="left:932.30px;top:340px;font-size:14.6px;font-weight:normal;font-style:normal;color:#284775;">0</span>
<span class="t" style="left:990.60px;top:340px;font-size:14.6px;font-weight:normal;font-style:normal;color:#284775;">0</span>
<span class="t" style="left:1016.12px;top:340px;font-size:14.6px;font-weight:normal;font-style:normal;color:#284775;transform:scaleX(0.9920);">2.0000</span>
<span class="t" style="left:1070.12px;top:340px;font-size:14.6px;font-weight:normal;font-style:normal;color:#284775;transform:scaleX(0.9920);">0.0000</span>
<span class="t" style="left:1124.12px;top:340px;font-size:14.6px;font-weight:normal;font-style:normal;color:#284775;transform:scaleX(0.9920);">0.0000</span>
<span class="t" style="left:1177.72px;top:340px;font-size:14.6px;font-weight:normal;font-style:normal;color:#284775;transform:scaleX(0.9920);">8.0000</span>
<span class="t" style="left:1231.68px;top:340px;font-size:14.6px;font-weight:normal;font-style:normal;color:#284775;transform:scaleX(0.9942);">400.0000</span>
<svg class="b" style="left:746px;top:341px" width="17" height="17" viewBox="0 0 17 17"><path d="M8.5 0.7 L16.2 16 L8.5 13.2 L0.8 16 Z" fill="#008000"/></svg>
<div class="b" style="left:1300px;top:345px;width:9px;height:9px;background:#2b2b2b;background:radial-gradient(circle at 50% 50%,#ffff00 0,#f4f400 2.4px,#6b6b10 3.8px,#2b2b2b 4.6px);"></div>
<span class="t" style="left:1319.33px;top:340px;font-size:14.6px;font-weight:normal;font-style:normal;color:#0000FF;transform:scaleX(0.9420);text-decoration:underline;">Select</span>
<div class="btn" style="left:1367px;top:338px;width:44px;background:#44c767;"></div>
<div class="btn" style="left:1419px;top:338px;width:49px;background:#ff6600;"></div>
<span class="t" style="left:1382.73px;top:340px;font-size:9.7px;font-weight:normal;font-style:normal;color:#fff;transform:scaleX(1.0881);text-shadow:0 1px 0 #2f6627;-webkit-text-stroke:0.2px #fff;">Buy</span>
<span class="t" style="left:1435.32px;top:340px;font-size:9.7px;font-weight:normal;font-style:normal;color:#fff;transform:scaleX(1.1004);text-shadow:0 1px 0 #2f6627;-webkit-text-stroke:0.2px #fff;">Sell</span>
<span class="t" style="left:1477.34px;top:340px;font-size:14.6px;font-weight:normal;font-style:normal;color:#FF0000;transform:scaleX(0.9904);">09-Oct-2020</span>
<span class="t" style="left:1574.01px;top:340px;font-size:14.6px;font-weight:normal;font-style:normal;color:#009900;transform:scaleX(0.9953);">Call Option</span>
<span class="t" style="left:1659.44px;top:340px;font-size:14.6px;font-weight:normal;font-style:normal;color:#0066FF;transform:scaleX(0.9954);">$130000.00</span>
<span class="t" style="left:1768.24px;top:340px;font-size:14.6px;font-weight:normal;font-style:normal;color:#0066FF;transform:scaleX(0.9949);">$20000.00</span>
<div class="b" style="left:28px;top:365px;width:1849px;height:31px;background:#F7F6F3;"></div>
<span class="t" style="left:31.23px;top:371px;font-size:14.6px;font-weight:normal;font-style:normal;color:#FF0000;transform:scaleX(1.0152);">Equity Option</span>
<span class="t" style="left:131.72px;top:371px;font-size:14.6px;font-weight:normal;font-style:normal;color:#000;transform:scaleX(0.8923);">AFRICAN SUN APRIL 22 C</span>
<span class="t" style="left:305.72px;top:371px;font-size:14.6px;font-weight:normal;font-style:normal;color:#000;transform:scaleX(0.8859);">AFRICANSUN</span>
<span class="t" style="left:463.10px;top:371px;font-size:14.6px;font-weight:normal;font-style:normal;color:#008000;">0</span>
<span class="t" style="left:483.27px;top:371px;font-size:14.6px;font-weight:normal;font-style:italic;color:#008000;transform:scaleX(0.9920);">0.0000</span>
<span class="t" style="left:598.10px;top:371px;font-size:14.6px;font-weight:normal;font-style:normal;color:#FF4500;">0</span>
<span class="t" style="left:619.87px;top:371px;font-size:14.6px;font-weight:normal;font-style:italic;color:#FF4500;transform:scaleX(0.9920);">0.0000</span>
<span class="t" style="left:693.92px;top:371px;font-size:14.6px;font-weight:normal;font-style:normal;color:#333333;transform:scaleX(0.9920);">1.5000</span>
<span class="t" style="left:778.22px;top:371px;font-size:14.6px;font-weight:normal;font-style:normal;color:#333333;transform:scaleX(0.9920);">0.0000</span>
<span class="t" style="left:865.60px;top:371px;font-size:14.6px;font-weight:normal;font-style:normal;color:#333333;">0</span>
<span class="t" style="left:932.30px;top:371px;font-size:14.6px;font-weight:normal;font-style:normal;color:#333333;">0</span>
<span class="t" style="left:990.60px;top:371px;font-size:14.6px;font-weight:normal;font-style:normal;color:#333333;">0</span>
<span class="t" style="left:1016.12px;top:371px;font-size:14.6px;font-weight:normal;font-style:normal;color:#333333;transform:scaleX(0.9920);">1.5000</span>
<span class="t" style="left:1070.12px;top:371px;font-size:14.6px;font-weight:normal;font-style:normal;color:#333333;transform:scaleX(0.9920);">0.0000</span>
<span class="t" style="left:1124.12px;top:371px;font-size:14.6px;font-weight:normal;font-style:normal;color:#333333;transform:scaleX(0.9920);">0.0000</span>
<span class="t" style="left:1177.72px;top:371px;font-size:14.6px;font-weight:normal;font-style:normal;color:#333333;transform:scaleX(0.9920);">0.0000</span>
<span class="t" style="left:1247.92px;top:371px;font-size:14.6px;font-weight:normal;font-style:normal;color:#333333;transform:scaleX(0.9920);">0.0000</span>
<div class="b" style="left:747px;top:373px;width:15px;height:15px;background:#FFA500;border-radius:3px;"></div>
<div class="b" style="left:1300px;top:376px;width:9px;height:9px;background:#2b2b2b;background:radial-gradient(circle at 50% 50%,#ffff00 0,#f4f400 2.4px,#6b6b10 3.8px,#2b2b2b 4.6px);"></div>
<span class="t" style="left:1319.33px;top:371px;font-size:14.6px;font-weight:normal;font-style:normal;color:#0000FF;transform:scaleX(0.9420);text-decoration:underline;">Select</span>
<div class="btn" style="left:1367px;top:369px;width:44px;background:#44c767;"></div>
<div class="btn" style="left:1419px;top:369px;width:49px;background:#ff6600;"></div>
<span class="t" style="left:1382.73px;top:371px;font-size:9.7px;font-weight:normal;font-style:normal;color:#fff;transform:scaleX(1.0881);text-shadow:0 1px 0 #2f6627;-webkit-text-stroke:0.2px #fff;">Buy</span>
<span class="t" style="left:1435.32px;top:371px;font-size:9.7px;font-weight:normal;font-style:normal;color:#fff;transform:scaleX(1.1004);text-shadow:0 1px 0 #2f6627;-webkit-text-stroke:0.2px #fff;">Sell</span>
<span class="t" style="left:1477.17px;top:371px;font-size:14.6px;font-weight:normal;font-style:normal;color:#FF0000;">22-Apr-2022</span>
<span class="t" style="left:1574.01px;top:371px;font-size:14.6px;font-weight:normal;font-style:normal;color:#009900;transform:scaleX(0.9953);">Call Option</span>
<span class="t" style="left:1659.44px;top:371px;font-size:14.6px;font-weight:normal;font-style:normal;color:#0066FF;transform:scaleX(0.9942);">$1650.00</span>
<span class="t" style="left:1768.24px;top:371px;font-size:14.6px;font-weight:normal;font-style:normal;color:#0066FF;transform:scaleX(0.9933);">$150.00</span>
<div class="b" style="left:28px;top:396px;width:1849px;height:31px;background:#fff;"></div>
<span class="t" style="left:31.23px;top:402px;font-size:14.6px;font-weight:normal;font-style:normal;color:#FF0000;transform:scaleX(1.0152);">Equity Option</span>
<span class="t" style="left:130.57px;top:402px;font-size:14.6px;font-weight:normal;font-style:normal;color:#000;transform:scaleX(0.9865);">DV0000000013</span>
<span class="t" style="left:305.34px;top:402px;font-size:14.6px;font-weight:normal;font-style:normal;color:#000;transform:scaleX(0.8888);">ZIMRE</span>
<span class="t" style="left:446.86px;top:402px;font-size:14.6px;font-weight:normal;font-style:normal;color:#008000;">100</span>
<span class="t" style="left:483.27px;top:402px;font-size:14.6px;font-weight:normal;font-style:italic;color:#008000;transform:scaleX(0.9920);">1.2000</span>
<span class="t" style="left:598.24px;top:402px;font-size:14.6px;font-weight:normal;font-style:normal;color:#FF4500;">1</span>
<span class="t" style="left:619.87px;top:402px;font-size:14.6px;font-weight:normal;font-style:italic;color:#FF4500;transform:scaleX(0.9920);">1.0000</span>
<span class="t" style="left:693.92px;top:402px;font-size:14.6px;font-weight:normal;font-style:normal;color:#284775;transform:scaleX(0.9920);">1.0000</span>
<span class="t" style="left:778.22px;top:402px;font-size:14.6px;font-weight:normal;font-style:normal;color:#284775;transform:scaleX(0.9920);">1.2000</span>
<span class="t" style="left:849.36px;top:402px;font-size:14.6px;font-weight:normal;font-style:normal;color:#284775;">100</span>
<span class="t" style="left:932.30px;top:402px;font-size:14.6px;font-weight:normal;font-style:normal;color:#284775;">0</span>
<span class="t" style="left:990.60px;top:402px;font-size:14.6px;font-weight:normal;font-style:normal;color:#284775;">0</span>
<span class="t" style="left:1016.12px;top:402px;font-size:14.6px;font-weight:normal;font-style:normal;color:#284775;transform:scaleX(0.9920);">1.0000</span>
<span class="t" style="left:1070.12px;top:402px;font-size:14.6px;font-weight:normal;font-style:normal;color:#284775;transform:scaleX(0.9920);">0.0000</span>
<span class="t" style="left:1124.12px;top:402px;font-size:14.6px;font-weight:normal;font-style:normal;color:#284775;transform:scaleX(0.9920);">0.0000</span>
<span class="t" style="left:1177.72px;top:402px;font-size:14.6px;font-weight:normal;font-style:normal;color:#284775;transform:scaleX(0.9920);">0.0000</span>
<span class="t" style="left:1247.92px;top:402px;font-size:14.6px;font-weight:normal;font-style:normal;color:#284775;transform:scaleX(0.9920);">0.0000</span>
<div class="b" style="left:747px;top:404px;width:15px;height:15px;background:#FFA500;border-radius:3px;"></div>
<div class="b" style="left:1300px;top:407px;width:9px;height:9px;background:#2b2b2b;background:radial-gradient(circle at 50% 50%,#ffff00 0,#f4f400 2.4px,#6b6b10 3.8px,#2b2b2b 4.6px);"></div>
<span class="t" style="left:1319.33px;top:402px;font-size:14.6px;font-weight:normal;font-style:normal;color:#0000FF;transform:scaleX(0.9420);text-decoration:underline;">Select</span>
<div class="btn" style="left:1367px;top:400px;width:44px;background:#44c767;"></div>
<div class="btn" style="left:1419px;top:400px;width:49px;background:#ff6600;"></div>
<span class="t" style="left:1382.73px;top:402px;font-size:9.7px;font-weight:normal;font-style:normal;color:#fff;transform:scaleX(1.0881);text-shadow:0 1px 0 #2f6627;-webkit-text-stroke:0.2px #fff;">Buy</span>
<span class="t" style="left:1435.32px;top:402px;font-size:9.7px;font-weight:normal;font-style:normal;color:#fff;transform:scaleX(1.1004);text-shadow:0 1px 0 #2f6627;-webkit-text-stroke:0.2px #fff;">Sell</span>
<span class="t" style="left:1477.33px;top:402px;font-size:14.6px;font-weight:normal;font-style:normal;color:#FF0000;">07-May-2022</span>
<span class="t" style="left:1574.01px;top:402px;font-size:14.6px;font-weight:normal;font-style:normal;color:#009900;transform:scaleX(0.9953);">Call Option</span>
<span class="t" style="left:1659.44px;top:402px;font-size:14.6px;font-weight:normal;font-style:normal;color:#0066FF;transform:scaleX(0.9942);">$1100.00</span>
<span class="t" style="left:1768.24px;top:402px;font-size:14.6px;font-weight:normal;font-style:normal;color:#0066FF;transform:scaleX(0.9933);">$100.00</span>
<span class="t" style="left:28.02px;top:-8px;font-size:14.6px;font-weight:normal;font-style:normal;color:#000;transform:scaleX(1.0238);">Market Watch</span>
<span class="t" style="left:27.86px;top:449px;font-size:14.6px;font-weight:normal;font-style:normal;color:#000;transform:scaleX(0.9943);">News &amp; Updates</span>
<span class="t" style="left:971.99px;top:449px;font-size:14.6px;font-weight:normal;font-style:normal;color:#000;transform:scaleX(0.9677);">Recent Orders</span>
<span class="t" style="left:27.50px;top:481px;font-size:14.6px;font-weight:bold;font-style:normal;color:#000;transform:scaleX(0.9756);">Alert ID</span>
<span class="t" style="left:96.16px;top:481px;font-size:14.6px;font-weight:bold;font-style:normal;color:#000;transform:scaleX(0.9226);">Subject</span>
<span class="t" style="left:346.83px;top:481px;font-size:14.6px;font-weight:bold;font-style:normal;color:#000;transform:scaleX(0.9460);">Details</span>
<span class="t" style="left:725.65px;top:481px;font-size:14.6px;font-weight:bold;font-style:normal;color:#000;transform:scaleX(0.9595);">StartDate</span>
<span class="t" style="left:830.33px;top:481px;font-size:14.6px;font-weight:bold;font-style:normal;color:#000;transform:scaleX(0.9369);">EndDate</span>
<span class="t" style="left:27.04px;top:515px;font-size:14.6px;font-weight:normal;font-style:normal;color:#000;">37</span>
<span class="t" style="left:95.61px;top:515px;font-size:14.6px;font-weight:normal;font-style:normal;color:#000;transform:scaleX(0.8675);">FOR BROKER 4</span>
<span class="t" style="left:347.06px;top:515px;font-size:14.6px;font-weight:normal;font-style:normal;color:#000;transform:scaleX(0.8908);">YOU HAVE NEW SPECIAL OFFER, HURRY UP!!</span>
<span class="t" style="left:725.18px;top:515px;font-size:14.6px;font-weight:normal;font-style:normal;color:#000;transform:scaleX(0.9843);">29 Oct 2012</span>
<span class="t" style="left:829.98px;top:515px;font-size:14.6px;font-weight:normal;font-style:normal;color:#000;transform:scaleX(0.9869);">29 Oct 2012</span>
<div class="b" style="left:26px;top:542px;width:908px;height:34px;background:#fff;"></div>
<span class="t" style="left:27.04px;top:549px;font-size:14.6px;font-weight:normal;font-style:normal;color:#000;">36</span>
<span class="t" style="left:96.63px;top:549px;font-size:14.6px;font-weight:normal;font-style:normal;color:#000;transform:scaleX(0.8597);">ABCD ALERT</span>
<span class="t" style="left:347.33px;top:549px;font-size:14.6px;font-weight:normal;font-style:normal;color:#000;transform:scaleX(0.8540);">ABCDE ALERT</span>
<span class="t" style="left:725.18px;top:549px;font-size:14.6px;font-weight:normal;font-style:normal;color:#000;transform:scaleX(0.9843);">29 Oct 2012</span>
<span class="t" style="left:829.98px;top:549px;font-size:14.6px;font-weight:normal;font-style:normal;color:#000;transform:scaleX(0.9869);">29 Oct 2012</span>
<span class="t" style="left:27.04px;top:584px;font-size:14.6px;font-weight:normal;font-style:normal;color:#000;">35</span>
<span class="t" style="left:96.62px;top:584px;font-size:14.6px;font-weight:normal;font-style:normal;color:#000;transform:scaleX(0.8784);">ANOTHER ONE FOR BROKER1</span>
<span class="t" style="left:346.35px;top:584px;font-size:14.6px;font-weight:normal;font-style:normal;color:#000;transform:scaleX(0.8899);">U HAVE ANOTHER ONE OFFER</span>
<span class="t" style="left:725.18px;top:584px;font-size:14.6px;font-weight:normal;font-style:normal;color:#000;transform:scaleX(0.9843);">29 Oct 2012</span>
<span class="t" style="left:829.98px;top:584px;font-size:14.6px;font-weight:normal;font-style:normal;color:#000;transform:scaleX(0.9869);">29 Oct 2012</span>
<div class="b" style="left:26px;top:610px;width:908px;height:35px;background:#fff;"></div>
<span class="t" style="left:27.04px;top:618px;font-size:14.6px;font-weight:normal;font-style:normal;color:#000;">34</span>
<span class="t" style="left:95.61px;top:618px;font-size:14.6px;font-weight:normal;font-style:normal;color:#000;transform:scaleX(0.8679);">BROKER1</span>
<span class="t" style="left:346.78px;top:618px;font-size:14.6px;font-weight:normal;font-style:normal;color:#000;transform:scaleX(0.8539);">SPECIAL OFFER FOR YOU</span>
<span class="t" style="left:725.35px;top:618px;font-size:14.6px;font-weight:normal;font-style:normal;color:#000;transform:scaleX(0.9821);">30 Oct 2012</span>
<span class="t" style="left:830.15px;top:618px;font-size:14.6px;font-weight:normal;font-style:normal;color:#000;transform:scaleX(0.9846);">30 Oct 2012</span>
<span class="t" style="left:27.04px;top:652px;font-size:14.6px;font-weight:normal;font-style:normal;color:#000;">33</span>
<span class="t" style="left:96.63px;top:652px;font-size:14.6px;font-weight:normal;font-style:normal;color:#000;transform:scaleX(0.8432);">ALL ALERT</span>
<span class="t" style="left:346.29px;top:652px;font-size:14.6px;font-weight:normal;font-style:normal;color:#000;transform:scaleX(0.8878);">NEW OFFER</span>
<span class="t" style="left:725.18px;top:652px;font-size:14.6px;font-weight:normal;font-style:normal;color:#000;transform:scaleX(0.9843);">29 Oct 2012</span>
<span class="t" style="left:829.98px;top:652px;font-size:14.6px;font-weight:normal;font-style:normal;color:#000;transform:scaleX(0.9869);">29 Oct 2012</span>
<div class="b" style="left:26px;top:679px;width:908px;height:34px;background:#fff;"></div>
<span class="t" style="left:27.04px;top:687px;font-size:14.6px;font-weight:normal;font-style:normal;color:#000;">32</span>
<span class="t" style="left:95.51px;top:687px;font-size:14.6px;font-weight:normal;font-style:normal;color:#000;transform:scaleX(0.9261);">65TYU</span>
<span class="t" style="left:347.06px;top:687px;font-size:14.6px;font-weight:normal;font-style:normal;color:#000;transform:scaleX(0.8952);">TGYHUJM</span>
<span class="t" style="left:725.18px;top:687px;font-size:14.6px;font-weight:normal;font-style:normal;color:#000;transform:scaleX(0.9843);">26 Oct 2012</span>
<span class="t" style="left:829.98px;top:687px;font-size:14.6px;font-weight:normal;font-style:normal;color:#000;transform:scaleX(0.9869);">26 Oct 2012</span>
<span class="t" style="left:27.04px;top:721px;font-size:14.6px;font-weight:normal;font-style:normal;color:#000;">31</span>
<span class="t" style="left:96.37px;top:721px;font-size:14.6px;font-weight:normal;font-style:normal;color:#000;transform:scaleX(0.8628);">TRIAL</span>
<span class="t" style="left:347.06px;top:721px;font-size:14.6px;font-weight:normal;font-style:normal;color:#000;transform:scaleX(0.8927);">TRRAILAAA GHGDFGDF</span>
<span class="t" style="left:725.18px;top:721px;font-size:14.6px;font-weight:normal;font-style:normal;color:#000;transform:scaleX(0.9843);">26 Oct 2012</span>
<span class="t" style="left:829.98px;top:721px;font-size:14.6px;font-weight:normal;font-style:normal;color:#000;transform:scaleX(0.9869);">26 Oct 2012</span>
<div class="b" style="left:26px;top:748px;width:908px;height:34px;background:#fff;"></div>
<span class="t" style="left:27.04px;top:755px;font-size:14.6px;font-weight:normal;font-style:normal;color:#000;">30</span>
<span class="t" style="left:95.49px;top:755px;font-size:14.6px;font-weight:normal;font-style:normal;color:#000;transform:scaleX(0.9714);">D</span>
<span class="t" style="left:346.17px;top:755px;font-size:14.6px;font-weight:normal;font-style:normal;color:#000;transform:scaleX(0.9830);">D</span>
<span class="t" style="left:725.18px;top:755px;font-size:14.6px;font-weight:normal;font-style:normal;color:#000;transform:scaleX(0.9843);">26 Oct 2012</span>
<span class="t" style="left:829.98px;top:755px;font-size:14.6px;font-weight:normal;font-style:normal;color:#000;transform:scaleX(0.9869);">26 Oct 2012</span>
<span class="t" style="left:26.87px;top:790px;font-size:14.6px;font-weight:normal;font-style:normal;color:#000;">29</span>
<span class="t" style="left:96.37px;top:790px;font-size:14.6px;font-weight:normal;font-style:normal;color:#000;transform:scaleX(0.8618);">TESTING</span>
<span class="t" style="left:346.28px;top:790px;font-size:14.6px;font-weight:normal;font-style:normal;color:#000;transform:scaleX(0.8939);">MY ALERT</span>
<span class="t" style="left:725.18px;top:790px;font-size:14.6px;font-weight:normal;font-style:normal;color:#000;transform:scaleX(0.9843);">26 Oct 2012</span>
<span class="t" style="left:829.98px;top:790px;font-size:14.6px;font-weight:normal;font-style:normal;color:#000;transform:scaleX(0.9869);">26 Oct 2012</span>
<span class="t" style="left:971.18px;top:479px;font-size:14.6px;font-weight:bold;font-style:normal;color:#000;transform:scaleX(0.9500);">OrderType</span>
<span class="t" style="left:1078.09px;top:479px;font-size:14.6px;font-weight:bold;font-style:normal;color:#000;transform:scaleX(0.9295);">Company</span>
<span class="t" style="left:1228.59px;top:479px;font-size:14.6px;font-weight:bold;font-style:normal;color:#000;transform:scaleX(0.9302);">CDS Number</span>
<span class="t" style="left:1411.87px;top:479px;font-size:14.6px;font-weight:bold;font-style:normal;color:#000;transform:scaleX(0.9669);">Quantity</span>
<span class="t" style="left:1500.97px;top:479px;font-size:14.6px;font-weight:bold;font-style:normal;color:#000;transform:scaleX(0.8995);">Price</span>
<span class="t" style="left:1569.54px;top:479px;font-size:14.6px;font-weight:bold;font-style:normal;color:#000;transform:scaleX(0.9345);">Reference</span>
<span class="t" style="left:1670.60px;top:479px;font-size:14.6px;font-weight:bold;font-style:normal;color:#000;transform:scaleX(0.9745);">Date</span>
<span class="t" style="left:1790.97px;top:479px;font-size:14.6px;font-weight:bold;font-style:normal;color:#000;transform:scaleX(0.9082);">Status</span>
<span class="t" style="left:971.32px;top:510px;font-size:14.6px;font-weight:normal;font-style:normal;color:#FF69B4;transform:scaleX(0.7955);">SELL</span>
<span class="t" style="left:1078.19px;top:510px;font-size:14.6px;font-weight:normal;font-style:normal;color:#FF69B4;transform:scaleX(0.8854);">CAFCA.ZW</span>
<span class="t" style="left:1228.33px;top:510px;font-size:14.6px;font-weight:normal;font-style:normal;color:#FF69B4;">000101342093501</span>
<span class="t" style="left:1411.19px;top:510px;font-size:14.6px;font-weight:normal;font-style:normal;color:#FF69B4;">100</span>
<span class="t" style="left:1500.77px;top:510px;font-size:14.6px;font-weight:normal;font-style:normal;color:#FF69B4;transform:scaleX(0.9920);">4.0000</span>
<span class="t" style="left:1569.09px;top:510px;font-size:14.6px;font-weight:normal;font-style:normal;color:#FF69B4;">176201</span>
<span class="t" style="left:1670.40px;top:510px;font-size:14.6px;font-weight:normal;font-style:normal;color:#FF69B4;transform:scaleX(0.9890);">14 Apr 2022</span>
<span class="t" style="left:1790.20px;top:510px;font-size:14.6px;font-weight:normal;font-style:normal;color:#FF69B4;transform:scaleX(1.0416);">Matched</span>
<div class="b" style="left:970px;top:536px;width:908px;height:31px;background:#fff;"></div>
<span class="t" style="left:971.32px;top:542px;font-size:14.6px;font-weight:normal;font-style:normal;color:#FF69B4;transform:scaleX(0.7955);">SELL</span>
<span class="t" style="left:1078.19px;top:542px;font-size:14.6px;font-weight:normal;font-style:normal;color:#FF69B4;transform:scaleX(0.8854);">CAFCA.ZW</span>
<span class="t" style="left:1228.33px;top:542px;font-size:14.6px;font-weight:normal;font-style:normal;color:#FF69B4;">000101342093501</span>
<span class="t" style="left:1411.19px;top:542px;font-size:14.6px;font-weight:normal;font-style:normal;color:#FF69B4;">100</span>
<span class="t" style="left:1500.77px;top:542px;font-size:14.6px;font-weight:normal;font-style:normal;color:#FF69B4;transform:scaleX(0.9920);">4.0000</span>
<span class="t" style="left:1569.09px;top:542px;font-size:14.6px;font-weight:normal;font-style:normal;color:#FF69B4;">176201</span>
<span class="t" style="left:1670.40px;top:542px;font-size:14.6px;font-weight:normal;font-style:normal;color:#FF69B4;transform:scaleX(0.9890);">14 Apr 2022</span>
<span class="t" style="left:1790.27px;top:542px;font-size:14.6px;font-weight:normal;font-style:normal;color:#FF69B4;transform:scaleX(0.9875);">Pending</span>
<span class="t" style="left:970.78px;top:573px;font-size:14.6px;font-weight:normal;font-style:normal;color:#008000;transform:scaleX(0.8947);">BUY</span>
<span class="t" style="left:1078.19px;top:573px;font-size:14.6px;font-weight:normal;font-style:normal;color:#008000;transform:scaleX(0.8854);">CAFCA.ZW</span>
<span class="t" style="left:1228.33px;top:573px;font-size:14.6px;font-weight:normal;font-style:normal;color:#008000;">000101342093501</span>
<span class="t" style="left:1411.19px;top:573px;font-size:14.6px;font-weight:normal;font-style:normal;color:#008000;">100</span>
<span class="t" style="left:1500.77px;top:573px;font-size:14.6px;font-weight:normal;font-style:normal;color:#008000;transform:scaleX(0.9920);">4.0000</span>
<span class="t" style="left:1569.09px;top:573px;font-size:14.6px;font-weight:normal;font-style:normal;color:#008000;">176200</span>
<span class="t" style="left:1670.40px;top:573px;font-size:14.6px;font-weight:normal;font-style:normal;color:#008000;transform:scaleX(0.9890);">14 Apr 2022</span>
<span class="t" style="left:1790.20px;top:573px;font-size:14.6px;font-weight:normal;font-style:normal;color:#008000;transform:scaleX(1.0416);">Matched</span>
<div class="b" style="left:970px;top:598px;width:908px;height:31px;background:#fff;"></div>
<span class="t" style="left:970.78px;top:604px;font-size:14.6px;font-weight:normal;font-style:normal;color:#008000;transform:scaleX(0.8947);">BUY</span>
<span class="t" style="left:1078.19px;top:604px;font-size:14.6px;font-weight:normal;font-style:normal;color:#008000;transform:scaleX(0.8854);">CAFCA.ZW</span>
<span class="t" style="left:1228.33px;top:604px;font-size:14.6px;font-weight:normal;font-style:normal;color:#008000;">000101342093501</span>
<span class="t" style="left:1411.19px;top:604px;font-size:14.6px;font-weight:normal;font-style:normal;color:#008000;">100</span>
<span class="t" style="left:1500.77px;top:604px;font-size:14.6px;font-weight:normal;font-style:normal;color:#008000;transform:scaleX(0.9920);">4.0000</span>
<span class="t" style="left:1569.09px;top:604px;font-size:14.6px;font-weight:normal;font-style:normal;color:#008000;">176200</span>
<span class="t" style="left:1670.40px;top:604px;font-size:14.6px;font-weight:normal;font-style:normal;color:#008000;transform:scaleX(0.9890);">14 Apr 2022</span>
<span class="t" style="left:1790.27px;top:604px;font-size:14.6px;font-weight:normal;font-style:normal;color:#008000;transform:scaleX(0.9875);">Pending</span>
<span class="t" style="left:971.32px;top:635px;font-size:14.6px;font-weight:normal;font-style:normal;color:#FF69B4;transform:scaleX(0.7955);">SELL</span>
<span class="t" style="left:1077.67px;top:635px;font-size:14.6px;font-weight:normal;font-style:normal;color:#FF69B4;transform:scaleX(0.9813);">MMDZ.ZW</span>
<span class="t" style="left:1228.33px;top:635px;font-size:14.6px;font-weight:normal;font-style:normal;color:#FF69B4;">000101342093501</span>
<span class="t" style="left:1411.19px;top:635px;font-size:14.6px;font-weight:normal;font-style:normal;color:#FF69B4;">1000</span>
<span class="t" style="left:1500.52px;top:635px;font-size:14.6px;font-weight:normal;font-style:normal;color:#FF69B4;transform:scaleX(0.9920);">5.0000</span>
<span class="t" style="left:1569.09px;top:635px;font-size:14.6px;font-weight:normal;font-style:normal;color:#FF69B4;">176199</span>
<span class="t" style="left:1670.40px;top:635px;font-size:14.6px;font-weight:normal;font-style:normal;color:#FF69B4;transform:scaleX(0.9890);">13 Apr 2022</span>
<span class="t" style="left:1790.20px;top:635px;font-size:14.6px;font-weight:normal;font-style:normal;color:#FF69B4;transform:scaleX(1.0416);">Matched</span>
<div class="b" style="left:970px;top:660px;width:908px;height:31px;background:#fff;"></div>
<span class="t" style="left:971.32px;top:666px;font-size:14.6px;font-weight:normal;font-style:normal;color:#FF69B4;transform:scaleX(0.7955);">SELL</span>
<span class="t" style="left:1077.67px;top:666px;font-size:14.6px;font-weight:normal;font-style:normal;color:#FF69B4;transform:scaleX(0.9813);">MMDZ.ZW</span>
<span class="t" style="left:1228.33px;top:666px;font-size:14.6px;font-weight:normal;font-style:normal;color:#FF69B4;">000101342093501</span>
<span class="t" style="left:1411.19px;top:666px;font-size:14.6px;font-weight:normal;font-style:normal;color:#FF69B4;">1000</span>
<span class="t" style="left:1500.52px;top:666px;font-size:14.6px;font-weight:normal;font-style:normal;color:#FF69B4;transform:scaleX(0.9920);">5.0000</span>
<span class="t" style="left:1569.09px;top:666px;font-size:14.6px;font-weight:normal;font-style:normal;color:#FF69B4;">176199</span>
<span class="t" style="left:1670.40px;top:666px;font-size:14.6px;font-weight:normal;font-style:normal;color:#FF69B4;transform:scaleX(0.9890);">13 Apr 2022</span>
<span class="t" style="left:1790.27px;top:666px;font-size:14.6px;font-weight:normal;font-style:normal;color:#FF69B4;transform:scaleX(0.9875);">Pending</span>
<span class="t" style="left:970.78px;top:697px;font-size:14.6px;font-weight:normal;font-style:normal;color:#008000;transform:scaleX(0.8947);">BUY</span>
<span class="t" style="left:1077.67px;top:697px;font-size:14.6px;font-weight:normal;font-style:normal;color:#008000;transform:scaleX(0.9813);">MMDZ.ZW</span>
<span class="t" style="left:1228.33px;top:697px;font-size:14.6px;font-weight:normal;font-style:normal;color:#008000;">00000454878800</span>
<span class="t" style="left:1411.19px;top:697px;font-size:14.6px;font-weight:normal;font-style:normal;color:#008000;">1000</span>
<span class="t" style="left:1500.52px;top:697px;font-size:14.6px;font-weight:normal;font-style:normal;color:#008000;transform:scaleX(0.9920);">5.0000</span>
<span class="t" style="left:1569.09px;top:697px;font-size:14.6px;font-weight:normal;font-style:normal;color:#008000;">176198</span>
<span class="t" style="left:1670.40px;top:697px;font-size:14.6px;font-weight:normal;font-style:normal;color:#008000;transform:scaleX(0.9890);">13 Apr 2022</span>
<span class="t" style="left:1790.20px;top:697px;font-size:14.6px;font-weight:normal;font-style:normal;color:#008000;transform:scaleX(1.0416);">Matched</span>
<div class="b" style="left:970px;top:723px;width:908px;height:31px;background:#fff;"></div>
<span class="t" style="left:970.78px;top:729px;font-size:14.6px;font-weight:normal;font-style:normal;color:#008000;transform:scaleX(0.8947);">BUY</span>
<span class="t" style="left:1077.67px;top:729px;font-size:14.6px;font-weight:normal;font-style:normal;color:#008000;transform:scaleX(0.9813);">MMDZ.ZW</span>
<span class="t" style="left:1228.33px;top:729px;font-size:14.6px;font-weight:normal;font-style:normal;color:#008000;">00000454878800</span>
<span class="t" style="left:1411.19px;top:729px;font-size:14.6px;font-weight:normal;font-style:normal;color:#008000;">1000</span>
<span class="t" style="left:1500.52px;top:729px;font-size:14.6px;font-weight:normal;font-style:normal;color:#008000;transform:scaleX(0.9920);">5.0000</span>
<span class="t" style="left:1569.09px;top:729px;font-size:14.6px;font-weight:normal;font-style:normal;color:#008000;">176198</span>
<span class="t" style="left:1670.40px;top:729px;font-size:14.6px;font-weight:normal;font-style:normal;color:#008000;transform:scaleX(0.9890);">13 Apr 2022</span>
<span class="t" style="left:1790.27px;top:729px;font-size:14.6px;font-weight:normal;font-style:normal;color:#008000;transform:scaleX(0.9875);">Pending</span>
<span class="t" style="left:970.78px;top:760px;font-size:14.6px;font-weight:normal;font-style:normal;color:#008000;transform:scaleX(0.8947);">BUY</span>
<span class="t" style="left:1077.67px;top:760px;font-size:14.6px;font-weight:normal;font-style:normal;color:#008000;transform:scaleX(0.9825);">DV0000000036</span>
<span class="t" style="left:1228.33px;top:760px;font-size:14.6px;font-weight:normal;font-style:normal;color:#008000;">000000518519595</span>
<span class="t" style="left:1411.19px;top:760px;font-size:14.6px;font-weight:normal;font-style:normal;color:#008000;">1</span>
<span class="t" style="left:1500.55px;top:760px;font-size:14.6px;font-weight:normal;font-style:normal;color:#008000;transform:scaleX(0.9920);">3.0000</span>
<span class="t" style="left:1569.09px;top:760px;font-size:14.6px;font-weight:normal;font-style:normal;color:#008000;">176197</span>
<span class="t" style="left:1670.40px;top:760px;font-size:14.6px;font-weight:normal;font-style:normal;color:#008000;transform:scaleX(0.9890);">13 Apr 2022</span>
<span class="t" style="left:1790.27px;top:760px;font-size:14.6px;font-weight:normal;font-style:normal;color:#008000;transform:scaleX(0.9875);">Pending</span>
<div class="b" style="left:970px;top:785px;width:908px;height:28px;background:#fff;"></div>
<span class="t" style="left:971.32px;top:791px;font-size:14.6px;font-weight:normal;font-style:normal;color:#FF69B4;transform:scaleX(0.7955);">SELL</span>
<span class="t" style="left:1077.68px;top:791px;font-size:14.6px;font-weight:normal;font-style:normal;color:#FF69B4;transform:scaleX(0.9804);">DV0000000034</span>
<span class="t" style="left:1228.33px;top:791px;font-size:14.6px;font-weight:normal;font-style:normal;color:#FF69B4;">000000453519461</span>
<span class="t" style="left:1411.19px;top:791px;font-size:14.6px;font-weight:normal;font-style:normal;color:#FF69B4;">1</span>
<span class="t" style="left:1500.37px;top:791px;font-size:14.6px;font-weight:normal;font-style:normal;color:#FF69B4;transform:scaleX(0.9920);">2.4000</span>
<span class="t" style="left:1569.09px;top:791px;font-size:14.6px;font-weight:normal;font-style:normal;color:#FF69B4;">176192</span>
<span class="t" style="left:1670.40px;top:791px;font-size:14.6px;font-weight:normal;font-style:normal;color:#FF69B4;transform:scaleX(0.9890);">12 Apr 2022</span>
<span class="t" style="left:1790.27px;top:791px;font-size:14.6px;font-weight:normal;font-style:normal;color:#FF69B4;transform:scaleX(0.9875);">Pending</span>
<div class="b" style="left:1899px;top:0px;width:12px;height:813px;background:#f8f6f3;background-image:radial-gradient(circle,#d3f1f1 0.5px,rgba(211,241,241,0) 0.95px),radial-gradient(circle,#d3f1f1 0.5px,rgba(211,241,241,0) 0.95px);background-size:3px 4px,3px 4px;background-position:1px 0.5px,2.5px 2.5px;"></div>
<div class="b" style="left:1901px;top:0px;width:10px;height:662px;background:#c1c1c1;"></div>
<svg class="b" style="left:1904px;top:803px" width="7" height="8" viewBox="0 0 7 8"><path d="M0.6 1 L7 1 L7 4.6 L5.6 6.1 Z" fill="#4a4640"/></svg>
</body></html>
